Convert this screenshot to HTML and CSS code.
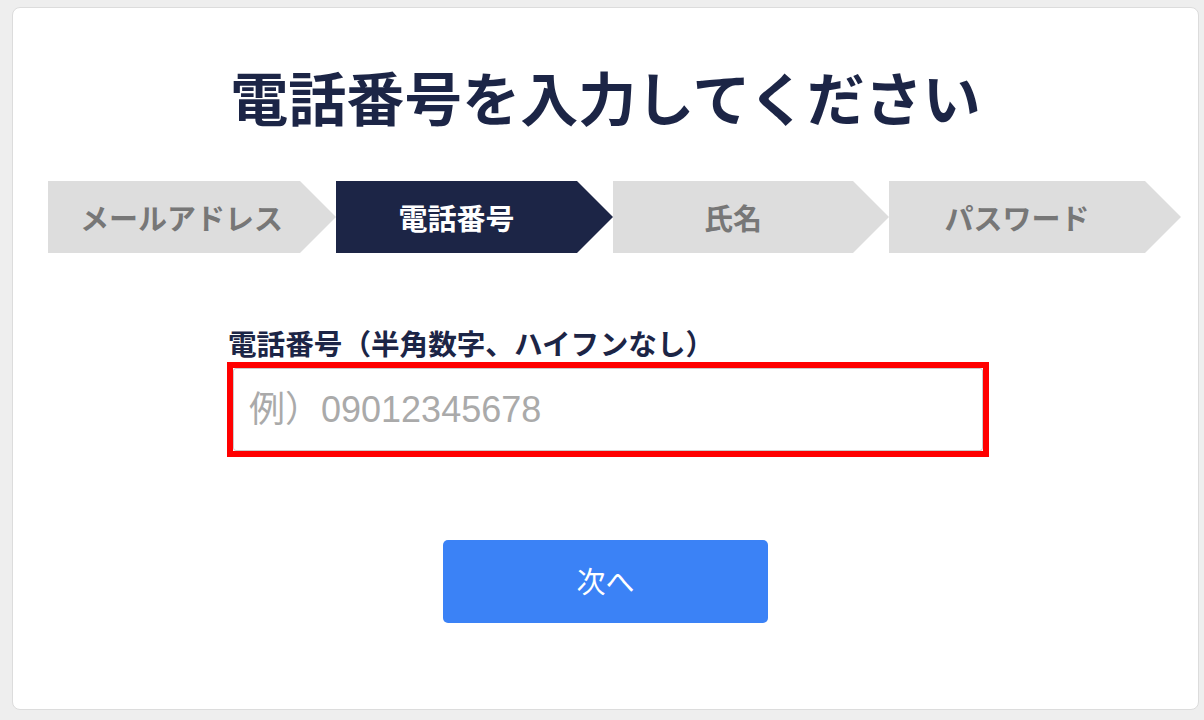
FILE: index.html
```html
<!DOCTYPE html>
<html lang="ja">
<head>
<meta charset="utf-8">
<title>電話番号を入力してください</title>
<link rel="stylesheet" href="styles.css">
</head>
<body>
<main class="card">
  <h1 class="title">電話番号を入力してください</h1>
  <ol class="steps">
    <li class="step step-first">メールアドレス</li>
    <li class="step step-active">電話番号</li>
    <li class="step">氏名</li>
    <li class="step">パスワード</li>
  </ol>
  <div class="field">
    <label class="field-label" for="tel">電話番号（半角数字、ハイフンなし）</label>
    <div class="field-frame">
      <input class="field-input" id="tel" type="tel" placeholder="例）09012345678">
    </div>
  </div>
  <button class="next-btn" type="button">次へ</button>
</main>
</body>
</html>
```

FILE: styles.css
```css
html, body {
  margin: 0;
  padding: 0;
}

body {
  background: #eeeeee;
  font-family: "Noto Sans CJK JP", "Noto Sans", sans-serif;
  padding: 7px 5px 10px 12px;
  box-sizing: border-box;
  height: 720px;
  overflow: hidden;
}

.card {
  box-sizing: border-box;
  width: 1187px;
  height: 703px;
  background: #ffffff;
  border: 1px solid #dcdcdc;
  border-radius: 8px;
  padding-top: 53px;
  display: flex;
  flex-direction: column;
}

.title {
  margin: 0;
  font-size: 58px;
  line-height: 70px;
  font-weight: 700;
  color: #1c2546;
  text-align: center;
}

.steps {
  list-style: none;
  margin: 50px 0 0 35px;
  padding: 0;
  display: grid;
  grid-template-columns: 288px 277px 276px 292px;
  height: 72px;
}

.step {
  display: flex;
  align-items: center;
  justify-content: center;
  padding-right: 36px;
  background: #dddddd;
  color: #777777;
  font-size: 29px;
  font-weight: 700;
  clip-path: polygon(0 0, calc(100% - 36px) 0, 100% 50%, calc(100% - 36px) 100%, 0 100%);
}

.step-first {
  padding-right: 21px;
}

.step-active {
  background: #1c2546;
  color: #ffffff;
}

.field {
  margin: 72px 0 0 214px;
  width: 762px;
  display: flex;
  flex-direction: column;
}

.field-label {
  font-size: 28.6px;
  line-height: 36px;
  font-weight: 700;
  color: #1c2546;
  margin-bottom: 1px;
  margin-left: 1px;
}

.field-frame {
  border: 6px solid #ff0000;
  background: #ffffff;
}

.field-input {
  display: block;
  box-sizing: border-box;
  width: 100%;
  height: 83px;
  margin: 0;
  border: 1px solid #cccccc;
  border-radius: 3px;
  outline: none;
  padding: 0 15px;
  font-family: "Liberation Sans", "Noto Sans CJK JP", sans-serif;
  font-size: 36px;
  color: #333333;
  background: #ffffff;
}

.field-input::placeholder {
  color: #aaaaaa;
}

.next-btn {
  margin: 83px auto 0;
  width: 325px;
  height: 83px;
  padding: 0 0 4px;
  border: none;
  border-radius: 5px;
  background: #3b82f6;
  color: #ffffff;
  font-family: "Noto Sans CJK JP", "Noto Sans", sans-serif;
  font-size: 29px;
  font-weight: 400;
  cursor: pointer;
}
```
